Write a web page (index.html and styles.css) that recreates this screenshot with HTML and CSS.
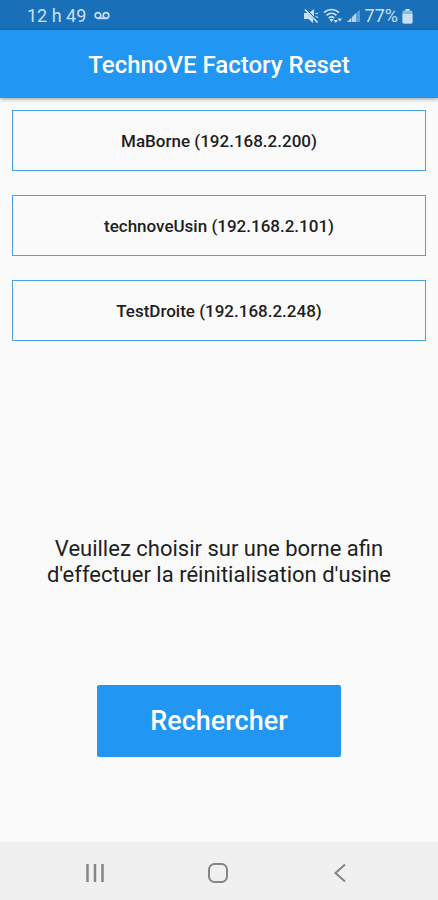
FILE: index.html
```html
<!DOCTYPE html>
<html lang="fr">
<head>
<meta charset="utf-8">
<meta name="viewport" content="width=device-width, initial-scale=1">
<title>TechnoVE Factory Reset</title>
<link rel="stylesheet" href="styles.css">
</head>
<body>
<div class="status-bar">
  <div class="status-group">
    <span>12 h 49</span>
    <svg width="16" height="10" viewBox="0 0 16 10" fill="none" stroke="currentColor" stroke-width="1.7" aria-hidden="true">
      <circle cx="4" cy="4.500" r="2.800"/><circle cx="12" cy="4.500" r="2.800"/><path d="M4 7.300h8"/>
    </svg>
  </div>
  <div class="status-group status-icons">
    <svg width="15" height="16" viewBox="0 0 15 16" fill="currentColor" aria-hidden="true">
      <path d="M0 5h3.500l5.500 6v4l-4.500-4H0zM5.500 4.500L10 1v8.500z"/>
      <path d="M1 1.500l12.500 13" fill="none" stroke="currentColor" stroke-width="1.800"/>
      <path d="M11.500 6l2.500-1M11.500 8.500l2.500 1" fill="none" stroke="currentColor" stroke-width="1.300"/>
      <path class="mute-gap" d="M3 1.800l9 9.400"/>
    </svg>
    <svg width="20" height="16" viewBox="0 0 20 16" fill="none" stroke="currentColor" stroke-width="1.700" aria-hidden="true">
      <path d="M1 4.500c4.500-4 10.500-4 15 0M3.500 7.300c3-2.700 7-2.700 10 0M5.800 10c1.700-1.400 3.700-1.400 5.400 0"/>
      <path d="M6.500 11.500c1.300-1 2.700-1 4 0l-2 2.500z" fill="currentColor" stroke="none"/>
      <path d="M10.500 12h4.500l-2.200 3zM14.500 10.500h4.500l-2.200 3z" fill="currentColor" stroke="none"/>
    </svg>
    <svg width="14" height="16" viewBox="0 0 14 16" fill="currentColor" aria-hidden="true">
      <path d="M0 14L13 1.500V14z" opacity=".4"/><path d="M0 14l4-4v4zM5 14V9l4-4v9z" opacity=".8"/>
    </svg>
    <span>77%</span>
    <svg width="11" height="15" viewBox="0 0 11 15" fill="currentColor" aria-hidden="true">
      <path d="M3.500 0h4v2h-4z"/><rect x=".5" y="1.500" width="10" height="13" rx="1.500" opacity=".65"/><path d="M.5 5h10v8q0 1.500-1.500 1.500H2Q.5 14.500.5 13z"/>
    </svg>
  </div>
</div>
<header class="app-bar"><h1>TechnoVE Factory Reset</h1></header>
<main>
  <div class="stations">
    <button class="station" type="button">MaBorne (192.168.2.200)</button>
    <button class="station" type="button">technoveUsin (192.168.2.101)</button>
    <button class="station" type="button">TestDroite (192.168.2.248)</button>
  </div>
  <p class="message">Veuillez choisir sur une borne afin d'effectuer la réinitialisation d'usine</p>
  <button class="search" type="button">Rechercher</button>
</main>
<nav class="system-nav" aria-label="Navigation">
  <button type="button" aria-label="Applications récentes">
    <svg width="20" height="20" viewBox="0 0 20 20" fill="none" stroke="currentColor" stroke-width="2.500"><path d="M2.500 1v18M10 1v18M17.500 1v18"/></svg>
  </button>
  <button type="button" aria-label="Accueil">
    <svg width="20" height="20" viewBox="0 0 20 20" fill="none" stroke="currentColor" stroke-width="2"><rect x="1" y="1" width="18" height="18" rx="5.500"/></svg>
  </button>
  <button type="button" aria-label="Retour">
    <svg width="20" height="20" viewBox="0 0 20 20" fill="none" stroke="currentColor" stroke-width="2"><path d="M15 1.500L5.500 10l9.500 8.500"/></svg>
  </button>
</nav>
</body>
</html>
```
FILE: styles.css
```css
* { box-sizing: border-box; }

body {
  margin: 0;
  min-height: 100vh;
  display: flex;
  flex-direction: column;
  background: #fafafa;
  color: #1e1e1e;
  font-family: Roboto, "Liberation Sans", sans-serif;
}

button {
  font-family: inherit;
  border: 0;
  background: none;
  cursor: pointer;
}

svg { display: block; flex: none; }

.status-bar {
  display: flex;
  justify-content: space-between;
  align-items: center;
  height: 30px;
  padding: 2px 25px 0 27px;
  background: #1a70b8;
  color: #c7e0f5;
  font-size: 18px;
  line-height: 28px;
}

.status-group {
  display: flex;
  align-items: center;
  gap: 8px;
}

.status-icons { gap: 4px; }

.mute-gap {
  fill: none;
  stroke: #1a70b8;
  stroke-width: 1;
}

.app-bar {
  display: flex;
  align-items: center;
  justify-content: center;
  height: 68px;
  padding-top: 2px;
  background: #2196f3;
  color: #fff;
  box-shadow: 0 1px 4px rgba(0, 0, 0, 0.4);
}

.app-bar h1 {
  margin: 0;
  font-size: 24px;
  line-height: 28px;
  font-weight: 500;
}

main {
  flex: 1;
  display: flex;
  flex-direction: column;
  align-items: center;
  padding: 12px 12px 85px;
}

.stations {
  align-self: stretch;
  display: flex;
  flex-direction: column;
  gap: 24px;
}

.station {
  height: 61px;
  border: 1px solid #4a9fe0;
  color: #1e1e1e;
  font-size: 17px;
  font-weight: 500;
}

.message {
  max-width: 360px;
  margin: auto 0 97px;
  font-size: 22px;
  line-height: 26px;
  text-align: center;
}

.search {
  height: 72px;
  padding: 0 53px;
  border-radius: 2px;
  background: #2196f3;
  color: #fff;
  font-size: 27px;
  font-weight: 500;
}

.system-nav {
  display: flex;
  justify-content: space-between;
  align-items: center;
  height: 58px;
  padding: 4px 88px 0 85px;
  background: #f0f0f0;
  color: #858585;
}

.system-nav button {
  padding: 0;
  color: inherit;
}
```
